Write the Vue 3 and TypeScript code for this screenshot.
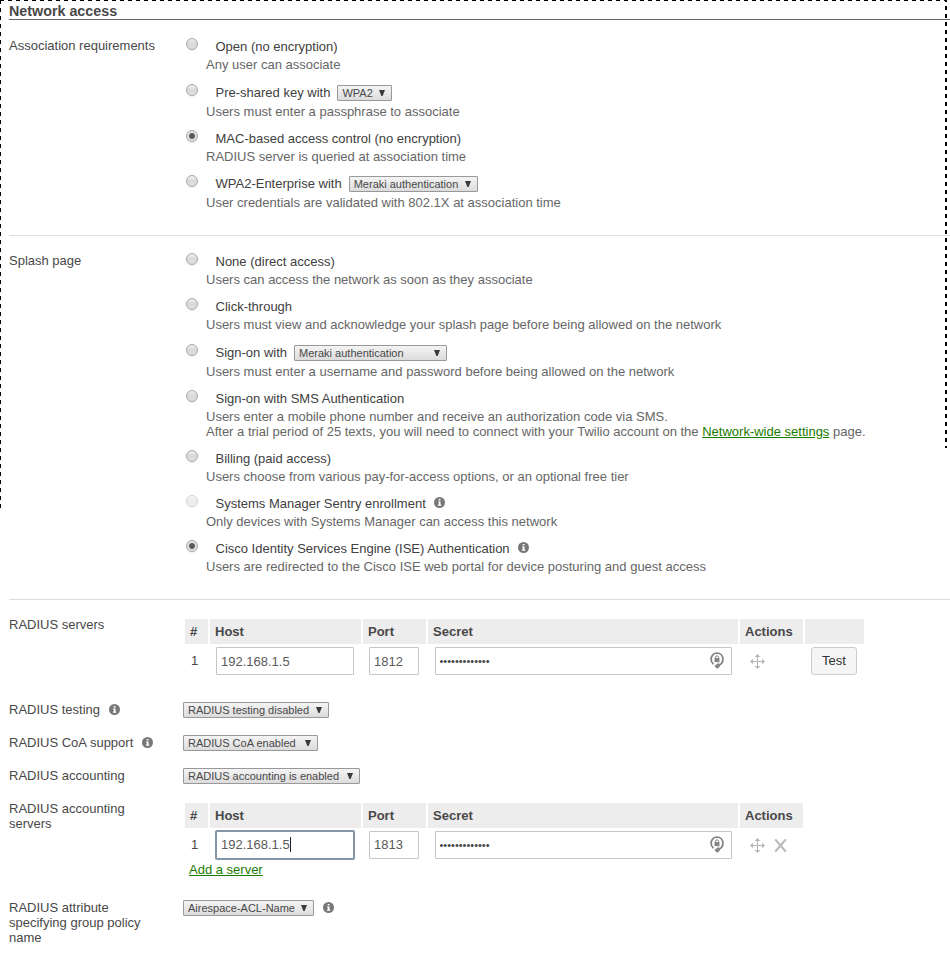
<script setup lang="ts">
interface Option {
  title: string
  desc?: string
  select?: string
  size?: string
  checked?: boolean
  disabled?: boolean
  info?: boolean
  drop?: boolean
  sms?: boolean
}

interface ServerTable {
  port: string
  focused: boolean
  testable: boolean
}

const association: Option[] = [
  { title: 'Open (no encryption)', desc: 'Any user can associate' },
  { title: 'Pre-shared key with', desc: 'Users must enter a passphrase to associate', select: 'WPA2', size: 'w-wpa', drop: true },
  { title: 'MAC-based access control (no encryption)', desc: 'RADIUS server is queried at association time', checked: true },
  { title: 'WPA2-Enterprise with', desc: 'User credentials are validated with 802.1X at association time', select: 'Meraki authentication', size: 'w-ent' },
]

const splash: Option[] = [
  { title: 'None (direct access)', desc: 'Users can access the network as soon as they associate' },
  { title: 'Click-through', desc: 'Users must view and acknowledge your splash page before being allowed on the network' },
  { title: 'Sign-on with', desc: 'Users must enter a username and password before being allowed on the network', select: 'Meraki authentication', size: 'w-sign', drop: true },
  { title: 'Sign-on with SMS Authentication', sms: true },
  { title: 'Billing (paid access)', desc: 'Users choose from various pay-for-access options, or an optional free tier' },
  { title: 'Systems Manager Sentry enrollment', desc: 'Only devices with Systems Manager can access this network', disabled: true, info: true },
  { title: 'Cisco Identity Services Engine (ISE) Authentication', desc: 'Users are redirected to the Cisco ISE web portal for device posturing and guest access', checked: true, info: true },
]

const sections = [
  { label: 'Association requirements', options: association },
  { label: 'Splash page', options: splash },
]

const radius = [
  { label: 'RADIUS servers', kind: 'servers', table: { port: '1812', focused: false, testable: true } as ServerTable },
  { label: 'RADIUS testing', kind: 'line', info: true, select: 'RADIUS testing disabled', size: 'w-testing' },
  { label: 'RADIUS CoA support', kind: 'line', info: true, select: 'RADIUS CoA enabled', size: 'w-coa' },
  { label: 'RADIUS accounting', kind: 'line', select: 'RADIUS accounting is enabled', size: 'w-acct' },
  { label: 'RADIUS accounting servers', kind: 'accounting', table: { port: '1813', focused: true, testable: false } as ServerTable },
  { label: 'RADIUS attribute specifying group policy name', kind: 'line', select: 'Airespace-ACL-Name', size: 'w-attr', trailingInfo: true },
]

const dots = '•'.repeat(13)
</script>

<template>
  <main class="page">
    <i class="dash dash-top"></i>
    <i class="dash dash-left"></i>
    <i class="dash dash-right"></i>

    <h1>Network access</h1>

    <section v-for="s in sections" :key="s.label" class="section">
      <div class="label">{{ s.label }}</div>
      <div class="options">
        <div v-for="o in s.options" :key="o.title" class="option" :class="{ drop: o.drop, picker: o.select }">
          <span class="radio" :class="{ checked: o.checked, disabled: o.disabled }"></span>
          <div class="title">
            <span>{{ o.title }}</span>
            <span v-if="o.select" class="select" :class="o.size">
              {{ o.select }}
              <svg class="arrow" viewBox="0 0 6 6"><path d="M0 0H6L3.6 6H2.4Z" /></svg>
            </span>
            <svg v-if="o.info" class="info" viewBox="0 0 11 11">
              <circle cx="5.5" cy="5.5" r="5.5" />
              <path d="M4.7 2h1.8v1.4H4.7zM4 4.4h2.5v3.2h.8v1.1H3.9V7.6h.9V5.4H4z" />
            </svg>
          </div>
          <p v-if="o.sms" class="desc">
            Users enter a mobile phone number and receive an authorization code via SMS.<br />After a trial period of 25
            texts, you will need to connect with your Twilio account on the <a>Network-wide settings</a> page.
          </p>
          <p v-else class="desc">{{ o.desc }}</p>
        </div>
      </div>
    </section>

    <section class="radius">
      <div v-for="r in radius" :key="r.label" class="row" :class="r.kind">
        <div class="label">
          <span>{{ r.label }}</span>
          <svg v-if="r.info" class="info" viewBox="0 0 11 11">
            <circle cx="5.5" cy="5.5" r="5.5" />
            <path d="M4.7 2h1.8v1.4H4.7zM4 4.4h2.5v3.2h.8v1.1H3.9V7.6h.9V5.4H4z" />
          </svg>
        </div>

        <div v-if="r.table" class="table">
          <div class="grid head">
            <b>#</b><b>Host</b><b>Port</b><b>Secret</b><b>Actions</b><b v-if="r.table.testable"></b>
          </div>
          <div class="grid body" :class="{ low: r.table.testable }">
            <div class="num">1</div>
            <div class="cell">
              <span class="field host" :class="{ focused: r.table.focused }">192.168.1.5<i v-if="r.table.focused" class="caret"></i></span>
            </div>
            <div class="cell"><span class="field port">{{ r.table.port }}</span></div>
            <div class="cell secret-cell">
              <span class="field secret">
                <span class="dots">{{ dots }}</span>
                <svg class="lock" viewBox="0 0 14 17">
                  <path class="ring" d="M3.5 12.3C1.8 11 1.1 9.3 1.1 7.3C1.1 3.6 3.7 1.1 7 1.1S12.9 3.6 12.9 7.3C12.9 10.4 11 13 7.5 13.6" />
                  <path class="fill" d="M9.6 11.6V15L7.2 16.8L4.3 13.9L7.6 11.4Z" />
                  <path class="shackle" d="M5.5 6.4V5.3a1.5 1.5 0 0 1 3 0V6.4" />
                  <path class="fill" d="M4.5 6h5v4.2h-5z" />
                </svg>
              </span>
            </div>
            <div class="cell actions">
              <svg class="move" viewBox="0 0 15 15">
                <path class="axis" d="M7.5 2V13M2 7.5H13" />
                <path class="tips" d="M7.5 0L10.3 3H4.7ZM7.5 15L4.7 12H10.3ZM0 7.5L3 4.7V10.3ZM15 7.5L12 10.3V4.7Z" />
              </svg>
              <svg v-if="!r.table.testable" class="remove" viewBox="0 0 13 13">
                <path d="M1.2 .4L11.8 12.6M11.8 .4L1.2 12.6" />
              </svg>
            </div>
            <div v-if="r.table.testable" class="cell"><button type="button">Test</button></div>
          </div>
          <a v-if="!r.table.testable" class="add">Add a server</a>
        </div>

        <div v-else class="control">
          <span class="select" :class="r.size">
            {{ r.select }}
            <svg class="arrow" viewBox="0 0 6 6"><path d="M0 0H6L3.6 6H2.4Z" /></svg>
          </span>
          <svg v-if="r.trailingInfo" class="info" viewBox="0 0 11 11">
            <circle cx="5.5" cy="5.5" r="5.5" />
            <path d="M4.7 2h1.8v1.4H4.7zM4 4.4h2.5v3.2h.8v1.1H3.9V7.6h.9V5.4H4z" />
          </svg>
        </div>
      </div>
    </section>
  </main>
</template>

<style>
body {
  background: #fff;
}
</style>

<style scoped>
* {
  box-sizing: border-box;
}
.page {
  position: relative;
  width: 950px;
  height: 956px;
  padding-left: 9px;
  overflow: hidden;
  font: 13px/15px "Liberation Sans", Arial, sans-serif;
  color: #484848;
}
.dash {
  position: absolute;
}
.dash-top {
  top: 0;
  left: 0;
  width: 947px;
  height: 1px;
  background: repeating-linear-gradient(90deg, #000 0 4px, transparent 4px 8px);
}
.dash-left {
  top: 0;
  left: 0;
  width: 1px;
  height: 508px;
  background: repeating-linear-gradient(180deg, #000 0 4px, transparent 4px 8px);
}
.dash-right {
  top: 0;
  left: 945px;
  width: 2px;
  height: 448px;
  background: repeating-linear-gradient(180deg, #000 0 2px, transparent 2px 6px, #000 6px 8px);
}
h1 {
  height: 20px;
  margin: 0;
  padding-top: 3px;
  border-bottom: 1px solid #666;
  font-size: 14.3px;
  line-height: 16px;
}
.section {
  display: flex;
  padding: 17px 0 25px;
  border-bottom: 1px solid #ddd;
}
h1 + .section {
  padding-top: 18px;
}
.label {
  display: flex;
  flex: none;
  gap: 9px;
  width: 174px;
  padding-right: 27px;
  white-space: nowrap;
}
.options {
  display: flex;
  flex-direction: column;
  gap: 12px;
  padding-top: 1px;
}
.option {
  display: grid;
  grid-template-columns: 20px auto;
  padding-left: 3px;
}
.option.drop {
  padding-top: 1px;
}
.radio {
  width: 12px;
  height: 12px;
  margin-top: -1px;
  border: 1px solid #a9a9a9;
  border-radius: 50%;
  background: linear-gradient(#f0f0f0, #dadada 45%, #e0e0e0);
  box-shadow: 0 1px 1px rgba(0, 0, 0, 0.08);
}
.radio.checked {
  background: radial-gradient(circle, #5a5a5a 0 2.5px, #e0e0e0 3.4px);
}
.radio.disabled {
  opacity: 0.5;
}
.title {
  display: flex;
  height: 15px;
  padding-left: 9.5px;
  color: #404040;
  white-space: nowrap;
}
.title .select {
  margin-left: 7px;
}
.title .info {
  margin: 1px 0 0 8.5px;
}
.desc {
  grid-column: 2;
  margin: 3px 0 0;
  color: #666;
  white-space: nowrap;
}
.picker .desc {
  margin-top: 4px;
}
a {
  color: #1a7a00;
  text-decoration: underline;
}
.select {
  display: flex;
  flex: none;
  align-items: center;
  justify-content: space-between;
  height: 16px;
  padding: 0 6px 0 4px;
  border: 1px solid #999;
  border-radius: 1px;
  background: linear-gradient(#f4f4f4, #dcdcdc);
  font-size: 11px;
  line-height: 14px;
  color: #484848;
  white-space: nowrap;
}
.arrow {
  width: 6px;
  height: 6px;
  margin-top: -1px;
  fill: #3a3a3a;
}
.w-wpa { width: 55px; }
.w-ent { width: 129px; }
.w-sign { width: 153px; }
.w-testing { width: 146px; }
.w-coa { width: 135px; }
.w-acct { width: 177px; }
.w-attr { width: 131px; }
.info {
  flex: none;
  width: 11px;
  height: 11px;
  margin-top: 2px;
}
.info circle {
  fill: #777;
}
.info path {
  fill: #fff;
}
.radius {
  padding-top: 17px;
}
.row {
  display: flex;
  height: 33px;
}
.row.servers {
  height: 85px;
}
.row.accounting {
  height: 99px;
}
.row:nth-child(n + 5) .label {
  white-space: normal;
}
.control {
  display: flex;
  gap: 9px;
  height: 16px;
}
.table {
  padding: 2px 0 0 2px;
}
.grid {
  display: grid;
  grid-template-columns: 23px 151px 63px 310px 63px 59px;
  column-gap: 2px;
}
.head b {
  height: 25px;
  padding: 5px 5px 0;
  background: #ededed;
}
.body {
  padding-top: 3px;
}
.num {
  padding: 6px 0 0 6px;
}
.cell {
  padding-left: 6px;
}
.secret-cell {
  padding-left: 7px;
}
.field {
  display: flex;
  align-items: center;
  height: 28px;
  padding: 0 7px 1px 4px;
  border: 1px solid #c6c6c6;
  border-radius: 1px;
  background: #fff;
  color: #5a5a5a;
}
.low .field {
  padding-bottom: 0;
}
.host {
  width: 138px;
}
.port {
  width: 50px;
}
.secret,
.low .secret {
  justify-content: space-between;
  width: 297px;
  padding: 0 7px 0 3.5px;
}
.focused {
  border-color: #8496a6;
  box-shadow: 0 0 0 1px #8496a6;
}
.caret {
  width: 1px;
  height: 15px;
  background: #222;
}
.dots {
  font-size: 11px;
  color: #444;
}
.lock {
  width: 14px;
  height: 17px;
  margin-top: -1px;
}
.ring,
.shackle {
  fill: none;
  stroke: #858585;
  stroke-width: 1.8;
}
.shackle {
  stroke-width: 1;
}
.fill {
  fill: #858585;
}
.actions {
  display: flex;
  gap: 9px;
  padding: 7px 0 0 10px;
}
.move {
  width: 15px;
  height: 15px;
}
.axis {
  fill: none;
  stroke: #b5b5b5;
}
.tips {
  fill: #b5b5b5;
}
.remove {
  width: 13px;
  height: 13px;
  margin-top: 1px;
}
.remove path {
  fill: none;
  stroke: #bbb;
  stroke-width: 2.2;
}
button {
  display: block;
  width: 46px;
  height: 28px;
  padding: 0 0 1px;
  border: 1px solid #ccc;
  border-radius: 3px;
  background: #f5f5f5;
  font: inherit;
  color: #333;
}
.add {
  display: block;
  margin: 3px 0 0 4px;
}
</style>
